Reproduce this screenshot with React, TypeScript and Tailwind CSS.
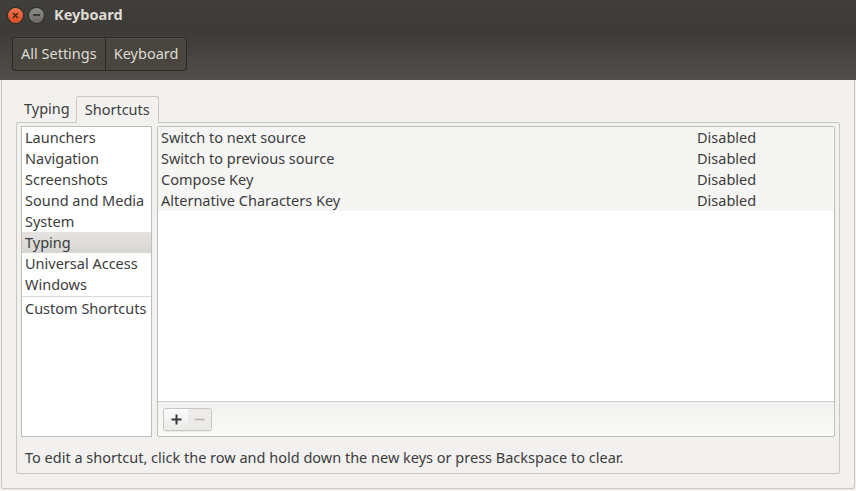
import React from 'react';

const categories = ['Launchers', 'Navigation', 'Screenshots', 'Sound and Media', 'System', 'Typing', 'Universal Access', 'Windows'];

const shortcuts = [
  { name: 'Switch to next source', value: 'Disabled' },
  { name: 'Switch to previous source', value: 'Disabled' },
  { name: 'Compose Key', value: 'Disabled' },
  { name: 'Alternative Characters Key', value: 'Disabled' },
];

const App: React.FC = () => {
  return (
    <div
      className="w-[856px] h-[491px] overflow-hidden flex flex-col bg-[#f2f1f0] text-[#3c3c3c] text-[14.5px]"
      style={{ fontFamily: '"Noto Sans", "Open Sans", sans-serif' }}
    >
      {/* Title bar */}
      <div className="h-[30px] flex items-center bg-gradient-to-b from-[#403f3b] to-[#3c3b37] pl-[8px]">
        <div className="w-[15px] h-[15px] rounded-full bg-gradient-to-b from-[#f2764a] to-[#de4a1e] flex items-center justify-center shadow-[0_0_0_1px_#2e2d29]">
          <svg width="7" height="7" viewBox="0 0 7 7">
            <path d="M1 1L6 6M6 1L1 6" stroke="#3c2018" strokeWidth="1.3" />
          </svg>
        </div>
        <div className="w-[15px] h-[15px] ml-[6px] rounded-full bg-gradient-to-b from-[#8c8b87] to-[#6b6a66] flex items-center justify-center shadow-[0_0_0_1px_#2e2d29]">
          <div className="w-[7px] h-[1.5px] bg-[#3c3b37]" />
        </div>
        <span className="ml-[10px] font-bold text-[#dfdbd2] text-[14.5px]">Keyboard</span>
      </div>

      {/* Toolbar */}
      <div className="h-[50px] flex items-start pt-[7px] px-[12px] bg-gradient-to-b from-[#3c3b37] to-[#514f4a]">
        <div className="flex h-[34px] rounded-[3px] border border-[#2b2a27] bg-[#48463f] shadow-[inset_0_1px_0_rgba(255,255,255,0.06)] text-[#dfdbd2]">
          <div className="px-[8px] flex items-center border-r border-[#2b2a27]">All Settings</div>
          <div className="px-[8px] flex items-center">Keyboard</div>
        </div>
      </div>

      {/* Body */}
      <div className="flex-1 flex flex-col px-[1px] pb-[2px]">
        <div className="flex-1 flex flex-col border-x border-b border-[#c9c7c3] rounded-b-[3px] px-[14px] pt-[16px] pb-[14px]">
          {/* Tabs */}
          <div className="flex items-end h-[26px] pl-[3px]">
            <div className="px-[5px] pb-[2px] text-[#3c3c3c]">Typing</div>
            <div className="h-[27px] -mb-[1px] ml-[1px] px-[8px] flex items-center border border-b-0 border-[#c9c7c3] rounded-t-[3px] bg-[#f2f1f0] relative z-10">
              Shortcuts
            </div>
          </div>

          {/* Notebook page */}
          <div className="flex-1 flex flex-col border border-[#c9c7c3] rounded-[2px] px-[4px] pt-[3px] pb-[6px]">
            <div className="flex-1 flex gap-[5px]">
              {/* Category list */}
              <div className="w-[131px] bg-white border border-[#c0beba] flex flex-col">
                {categories.map((c) => (
                  <div
                    key={c}
                    className={`h-[21px] flex items-center px-[3px] ${c === 'Typing' ? 'bg-gradient-to-b from-[#e4e3e1] to-[#d6d5d2]' : ''}`}
                  >
                    {c}
                  </div>
                ))}
                <div className="h-[1px] bg-[#dcdad6] my-[1px]" />
                <div className="h-[21px] flex items-center px-[3px]">Custom Shortcuts</div>
              </div>

              {/* Shortcuts panel */}
              <div className="flex-1 flex flex-col border border-[#c0beba] rounded-[2px]">
                <div className="flex-1 bg-white border-b border-[#cfcdc9]">
                  {shortcuts.map((s) => (
                    <div key={s.name} className="h-[21px] flex items-center bg-[#f5f5f4] px-[3px]">
                      <span className="flex-1">{s.name}</span>
                      <span className="w-[134px]">{s.value}</span>
                    </div>
                  ))}
                </div>
                <div className="h-[34px] flex items-center px-[5px] bg-gradient-to-b from-[#f2f1f0] to-[#fafaf9] rounded-b-[2px]">
                  <div className="flex h-[23px] rounded-[3px] border border-[#c8c6c2] bg-[#f4f3f2] shadow-[0_1px_0_rgba(0,0,0,0.05)]">
                    <div className="w-[24px] flex items-center justify-center bg-gradient-to-b from-[#fbfbfb] to-[#ebeae8] rounded-l-[3px]">
                      <svg width="11" height="11" viewBox="0 0 11 11">
                        <path d="M5.5 0.5V10.5M0.5 5.5H10.5" stroke="#3c3c3c" strokeWidth="2" />
                      </svg>
                    </div>
                    <div className="w-[23px] flex items-center justify-center bg-[#ecebe9] rounded-r-[3px]">
                      <svg width="11" height="11" viewBox="0 0 11 11">
                        <path d="M0.5 5.5H10.5" stroke="#b5b3af" strokeWidth="1.5" />
                      </svg>
                    </div>
                  </div>
                </div>
              </div>
            </div>

            <div className="mt-[10px] pl-[4px] leading-[20px]">
              To edit a shortcut, click the row and hold down the new keys or press Backspace to clear.
            </div>
          </div>
        </div>
      </div>
    </div>
  );
};

export default App;
